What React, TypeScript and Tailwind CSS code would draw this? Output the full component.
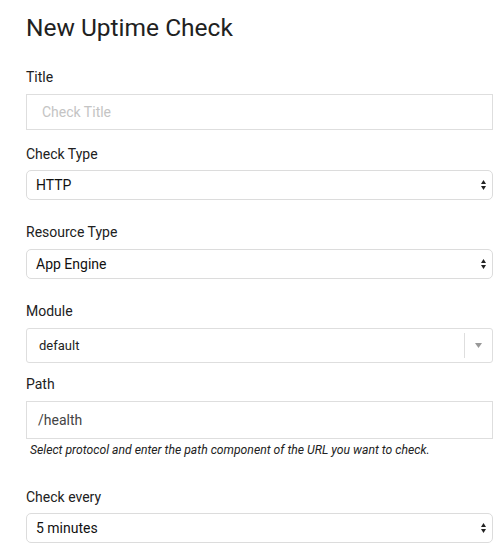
import React from 'react'

type FieldProps = {
  label: string
  className?: string
  children: React.ReactNode
}

function Field({ label, className = '', children }: FieldProps) {
  return (
    <div className={className}>
      <div className="text-[14px] leading-5 text-[#212121]">{label}</div>
      {children}
    </div>
  )
}

function UpDownArrows() {
  return (
    <svg width="5" height="10" viewBox="0 0 5 10" className="shrink-0">
      <polygon points="0,4 2.5,0 5,4" fill="#222" />
      <polygon points="0,6 2.5,10 5,6" fill="#222" />
    </svg>
  )
}

function NativeSelect({ value, className = '' }: { value: string; className?: string }) {
  return (
    <div
      className={`flex items-center justify-between rounded-[5px] border border-[#dcdcdc] bg-white pl-[9px] pr-[6px] text-[14px] text-[#111] ${className}`}
    >
      <span>{value}</span>
      <UpDownArrows />
    </div>
  )
}

export default function App() {
  return (
    <div className="min-h-screen bg-white pl-[26px] pr-[10px] pt-[14px] font-['Roboto',sans-serif]">
      <h1 className="text-[24.5px] leading-[28px] text-[#212121]">New Uptime Check</h1>

      <Field label="Title" className="mt-[25px]">
        <div className="mt-[7px] flex h-[36px] items-center border border-[#dedede] pl-[15px] text-[14px] text-[#c4c4c4]">
          Check Title
        </div>
      </Field>

      <Field label="Check Type" className="mt-[14px]">
        <NativeSelect value="HTTP" className="mt-[6px] h-[30px]" />
      </Field>

      <Field label="Resource Type" className="mt-[22px]">
        <NativeSelect value="App Engine" className="mt-[7px] h-[30px]" />
      </Field>

      <Field label="Module" className="mt-[22px]">
        <div className="mt-[7px] flex h-[35px] items-stretch rounded-[3px] border border-[#dedede] text-[13px] text-[#222]">
          <div className="flex flex-1 items-center pl-[12px]">default</div>
          <div className="my-[4px] flex w-[28px] items-center justify-center border-l border-[#dedede]">
            <svg width="7" height="5" viewBox="0 0 7 5">
              <polygon points="0,0 7,0 3.5,5" fill="#999" />
            </svg>
          </div>
        </div>
      </Field>

      <Field label="Path" className="mt-[11px]">
        <div className="mt-[7px] flex h-[38px] items-center border border-[#dedede] pl-[11px] text-[14px] text-[#444]">
          /health
        </div>
      </Field>
      <div className="mt-[3px] pl-[4px] text-[12.2px] italic leading-4 text-[#222]">
        Select protocol and enter the path component of the URL you want to check.
      </div>

      <Field label="Check every" className="mt-[29px]">
        <NativeSelect value="5 minutes" className="mt-[6px] h-[30px]" />
      </Field>
    </div>
  )
}
